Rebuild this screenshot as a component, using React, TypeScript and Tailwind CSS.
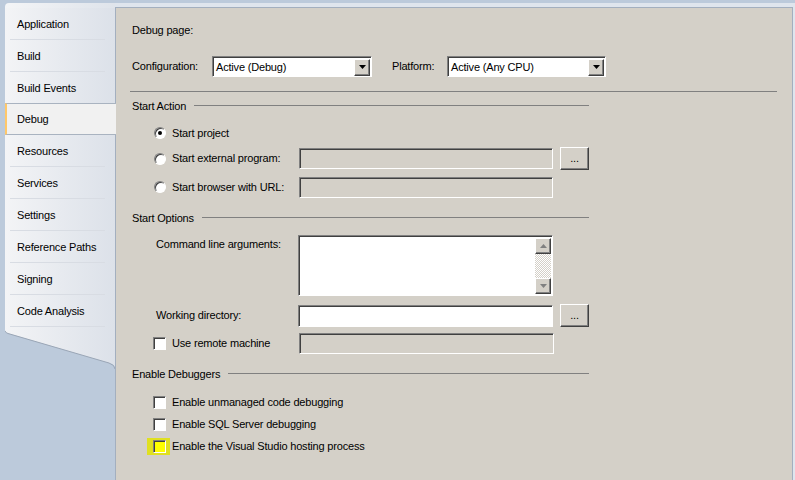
import React from "react";

const tabs = [
  "Application",
  "Build",
  "Build Events",
  "Debug",
  "Resources",
  "Services",
  "Settings",
  "Reference Paths",
  "Signing",
  "Code Analysis",
];

function Sunken({ className = "", children }: { className?: string; children?: React.ReactNode }) {
  return (
    <div
      className={`border border-t-[#808080] border-l-[#808080] border-b-white border-r-white shadow-[inset_1px_1px_0_#404040] ${className}`}
    >
      {children}
    </div>
  );
}

function Select({ value, w }: { value: string; w: string }) {
  return (
    <Sunken className={`${w} h-[21px] bg-white flex items-center p-[1px] pl-[2px]`}>
      <span className="flex-1 pl-[1px] pt-[1px]">{value}</span>
      <div className="w-[16px] h-[17px] mt-[1px] bg-[#d4d0c8] border border-t-white border-l-white border-b-[#404040] border-r-[#404040] shadow-[inset_-1px_-1px_0_#808080] flex items-center justify-center">
        <svg width="7" height="4" viewBox="0 0 7 4">
          <path d="M0 0h7L3.5 4z" fill="#000" />
        </svg>
      </div>
    </Sunken>
  );
}

function Browse() {
  return (
    <div className="w-[29px] h-[23px] ml-[7px] bg-[#d4d0c8] border border-t-white border-l-white border-b-[#404040] border-r-[#404040] shadow-[inset_-1px_-1px_0_#808080] flex items-end justify-center pb-[5px] text-[11px] leading-none">
      ...
    </div>
  );
}

function Radio({ checked }: { checked?: boolean }) {
  return (
    <span className="w-[12px] h-[12px] rounded-full border border-t-[#808080] border-l-[#808080] border-b-white border-r-white bg-white shadow-[inset_1px_1px_0_#404040] flex items-center justify-center shrink-0">
      {checked && <span className="w-[4px] h-[4px] rounded-full bg-black" />}
    </span>
  );
}

function Check({ highlight }: { highlight?: boolean }) {
  return (
    <span className="relative w-[13px] h-[13px] shrink-0">
      {highlight && <span className="absolute -left-[6px] -right-[4px] -top-[2px] -bottom-[2px] bg-[#e0e020]" />}
      <span
        className={`absolute inset-0 border border-t-[#808080] border-l-[#808080] border-b-white border-r-white shadow-[inset_1px_1px_0_#404040] ${
          highlight ? "bg-[#ffff00]" : "bg-white"
        }`}
      />
    </span>
  );
}

function Section({ title, className = "" }: { title: string; className?: string }) {
  return (
    <div className={`w-[457px] h-[16px] flex items-center gap-[8px] ${className}`}>
      <span>{title}</span>
      <div className="flex-1 h-px bg-[#808080] -mt-px" />
    </div>
  );
}

export default function App() {
  return (
    <div className="w-[795px] h-[480px] overflow-hidden bg-[#bccadb] pt-[3px] flex font-['Liberation_Sans',Arial,sans-serif] text-[11px] tracking-[-0.18px] text-black">
      {/* tab strip */}
      <div className="w-[110px] ml-[5px] flex flex-col relative z-10">
        <div className="h-[5px] bg-gradient-to-r from-[#f4f5f7] to-[#dfe4eb] rounded-tl-[4px]" />
        {tabs.map((t) =>
          t === "Debug" ? (
            <div
              key={t}
              className="w-[111px] h-[32px] -mt-px bg-[#f1f1f1] border-y border-[#a9b3c0] border-l-2 border-l-[#ffc86a] flex items-center pl-[10px] pt-px"
            >
              {t}
            </div>
          ) : (
            <div
              key={t}
              className="h-[32px] bg-gradient-to-r from-[#f3f4f6] to-[#dce1e9] flex flex-col"
            >
              <div className="flex-1 flex items-center pl-[12px] pt-px">{t}</div>
              {t !== "Build Events" && <div className="mx-[5px] h-px bg-[#d8dce3] w-[95px]" />}
            </div>
          )
        )}
        <svg width="110" height="42" viewBox="0 0 110 42" className="block">
          <defs>
            <linearGradient id="tg" x1="0" x2="1" y1="0" y2="0">
              <stop offset="0" stopColor="#f3f4f6" />
              <stop offset="1" stopColor="#dce1e9" />
            </linearGradient>
          </defs>
          <path d="M0 0H110V42C110 38 108 37 104 36L2 6Q0 5 0 3Z" fill="url(#tg)" />
          <path d="M0 4Q1 6 3 6.5L104 36Q110 38 110 42" fill="none" stroke="#9aa6b6" strokeWidth="1" />
        </svg>
      </div>

      {/* page */}
      <div className="flex-1 bg-[#dfe5ed] pt-[4px] pr-[2px] flex">
        <div className="flex-1 bg-[#d4d0c8] border border-[#a3afbf] border-b-0 pl-[16px] flex flex-col">
          <div className="h-[16px] mt-[14px] flex items-center">Debug page:</div>

          <div className="h-[21px] mt-[18px] flex items-center">
            <span className="w-[80px]">Configuration:</span>
            <Select value="Active (Debug)" w="w-[160px]" />
            <span className="w-[55px] ml-[20px]">Platform:</span>
            <Select value="Active (Any CPU)" w="w-[159px]" />
          </div>

          <div className="h-px w-[647px] -ml-[2px] mt-[14px] bg-[#808080]" />

          <Section title="Start Action" className="mt-[6px]" />

          <div className="h-[20px] mt-[9px] pl-[22px] flex items-center gap-[6px]">
            <Radio checked />
            <span>Start project</span>
          </div>
          <div className="h-[23px] mt-[4px] pl-[22px] flex items-center">
            <div className="w-[145px] flex items-center gap-[6px]">
              <Radio />
              <span>Start external program:</span>
            </div>
            <Sunken className="w-[254px] h-[21px] bg-[#d4d0c8]" />
            <Browse />
          </div>
          <div className="h-[20px] mt-[7px] pl-[22px] flex items-center">
            <div className="w-[145px] flex items-center gap-[6px]">
              <Radio />
              <span>Start browser with URL:</span>
            </div>
            <Sunken className="w-[254px] h-[21px] bg-[#d4d0c8]" />
          </div>

          <Section title="Start Options" className="mt-[13px]" />

          <div className="h-[61px] mt-[9px] pl-[24px] flex">
            <span className="w-[142px] pt-px">Command line arguments:</span>
            <Sunken className="w-[255px] h-[61px] bg-white flex justify-end p-px">
              <div className="w-[16px] flex flex-col mt-px">
                <div className="h-[16px] bg-[#d4d0c8] border border-t-white border-l-white border-b-[#404040] border-r-[#404040] shadow-[inset_-1px_-1px_0_#808080] flex items-center justify-center">
                  <svg width="7" height="4" viewBox="0 0 7 4">
                    <path d="M3.5 0L7 4H0z" fill="#808080" />
                  </svg>
                </div>
                <div className="flex-1 bg-[repeating-conic-gradient(#ffffff_0_25%,#d4d0c8_0_50%)] bg-[length:2px_2px]" />
                <div className="h-[16px] bg-[#d4d0c8] border border-t-white border-l-white border-b-[#404040] border-r-[#404040] shadow-[inset_-1px_-1px_0_#808080] flex items-center justify-center">
                  <svg width="7" height="4" viewBox="0 0 7 4">
                    <path d="M0 0h7L3.5 4z" fill="#808080" />
                  </svg>
                </div>
              </div>
            </Sunken>
          </div>

          <div className="h-[23px] mt-[8px] pl-[24px] flex items-center">
            <span className="w-[142px]">Working directory:</span>
            <Sunken className="w-[255px] h-[22px] bg-white" />
            <Browse />
          </div>

          <div className="h-[20px] mt-[6px] pl-[21px] flex items-center">
            <div className="w-[146px] flex items-center gap-[6px]">
              <Check />
              <span>Use remote machine</span>
            </div>
            <Sunken className="w-[255px] h-[21px] bg-[#d4d0c8]" />
          </div>

          <Section title="Enable Debuggers" className="mt-[13px]" />

          <div className="mt-[9px] pl-[21px] flex flex-col">
            <div className="h-[22px] flex items-center gap-[6px]">
              <Check />
              <span>Enable unmanaged code debugging</span>
            </div>
            <div className="h-[22px] flex items-center gap-[6px]">
              <Check />
              <span>Enable SQL Server debugging</span>
            </div>
            <div className="h-[22px] flex items-center gap-[6px]">
              <Check highlight />
              <span>Enable the Visual Studio hosting process</span>
            </div>
          </div>
        </div>
      </div>
    </div>
  );
}
